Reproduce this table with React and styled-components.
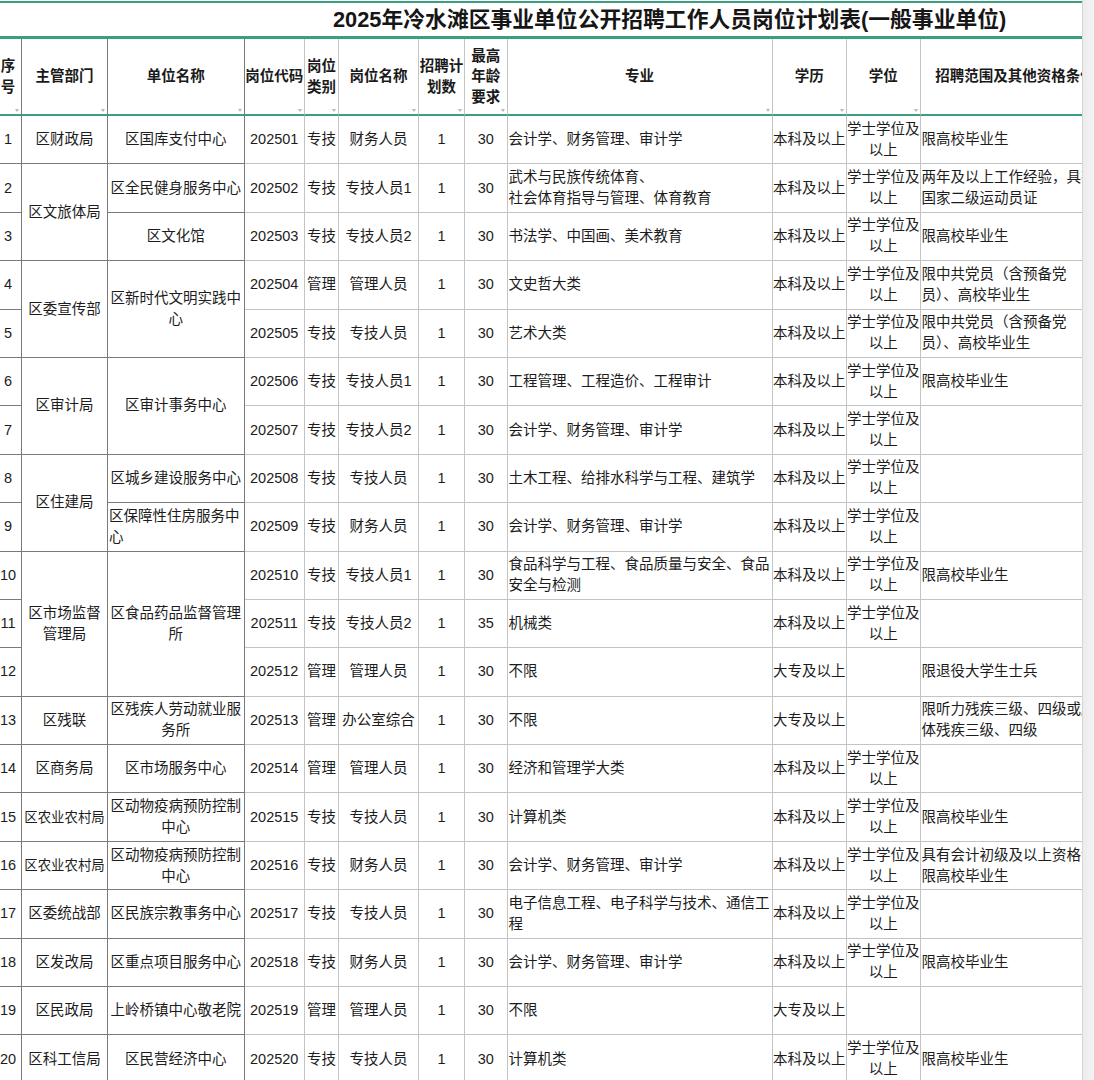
import React from "react";
import styled, { createGlobalStyle } from "styled-components";

const GREEN = "#3a9f80";
const DARK_LINE = "#7a7a7a";
const LIGHT_LINE = "#c4c4c4";

// column widths of the sheet (first column is partly scrolled off to the left)
const COLS = [27, 86, 136.5, 60.5, 34, 80, 46, 42.5, 265, 74.5, 73.5, 190];
const ALIGN = ["center", "center", "center", "center", "center", "center", "center", "center", "left", "center", "center", "left"];
const DARK_COLS = [0, 1, 2];

const HEADERS = [
  ["序", "号"],
  ["主管部门"],
  ["单位名称"],
  ["岗位代码"],
  ["岗位", "类别"],
  ["岗位名称"],
  ["招聘计", "划数"],
  ["最高", "年龄", "要求"],
  ["专业"],
  ["学历"],
  ["学位"],
  ["招聘范围及其他资格条件"],
];

const XS = ["学士学位及", "以上"];
const BK = "本科及以上";
const DZ = "大专及以上";
const GX = "限高校毕业生";
const KJ = "会计学、财务管理、审计学";
const DY = ["限中共党员（含预备党", "员）、高校毕业生"];

// null = covered by a merged cell above
const ROWS = [
  ["1", "区财政局", "区国库支付中心", "202501", "专技", "财务人员", "1", "30", KJ, BK, XS, GX],
  ["2", { t: "区文旅体局", span: 2 }, "区全民健身服务中心", "202502", "专技", "专技人员1", "1", "30",
    ["武术与民族传统体育、", "社会体育指导与管理、体育教育"], BK, XS, ["两年及以上工作经验，具有", "国家二级运动员证"]],
  ["3", null, "区文化馆", "202503", "专技", "专技人员2", "1", "30", "书法学、中国画、美术教育", BK, XS, GX],
  ["4", { t: "区委宣传部", span: 2 }, { t: ["区新时代文明实践中", "心"], span: 2 }, "202504", "管理", "管理人员", "1", "30", "文史哲大类", BK, XS, DY],
  ["5", null, null, "202505", "专技", "专技人员", "1", "30", "艺术大类", BK, XS, DY],
  ["6", { t: "区审计局", span: 2 }, { t: "区审计事务中心", span: 2 }, "202506", "专技", "专技人员1", "1", "30", "工程管理、工程造价、工程审计", BK, XS, GX],
  ["7", null, null, "202507", "专技", "专技人员2", "1", "30", KJ, BK, XS, ""],
  ["8", { t: "区住建局", span: 2 }, "区城乡建设服务中心", "202508", "专技", "专技人员", "1", "30", "土木工程、给排水科学与工程、建筑学", BK, XS, ""],
  ["9", null, { t: ["区保障性住房服务中", "心"], align: "left" }, "202509", "专技", "财务人员", "1", "30", KJ, BK, XS, ""],
  ["10", { t: ["区市场监督", "管理局"], span: 3 }, { t: ["区食品药品监督管理", "所"], span: 3 }, "202510", "专技", "专技人员1", "1", "30",
    ["食品科学与工程、食品质量与安全、食品", "安全与检测"], BK, XS, GX],
  ["11", null, null, "202511", "专技", "专技人员2", "1", "35", "机械类", BK, XS, ""],
  ["12", null, null, "202512", "管理", "管理人员", "1", "30", "不限", DZ, "", "限退役大学生士兵"],
  ["13", "区残联", ["区残疾人劳动就业服", "务所"], "202513", "管理", "办公室综合", "1", "30", "不限", DZ, "",
    ["限听力残疾三级、四级或肢", "体残疾三级、四级"]],
  ["14", "区商务局", "区市场服务中心", "202514", "管理", "管理人员", "1", "30", "经济和管理学大类", BK, XS, ""],
  ["15", { t: "区农业农村局", size: 13.4 }, ["区动物疫病预防控制", "中心"], "202515", "专技", "专技人员", "1", "30", "计算机类", BK, XS, GX],
  ["16", { t: "区农业农村局", size: 13.4 }, ["区动物疫病预防控制", "中心"], "202516", "专技", "财务人员", "1", "30", KJ, BK, XS,
    ["具有会计初级及以上资格证", "限高校毕业生"]],
  ["17", "区委统战部", "区民族宗教事务中心", "202517", "专技", "专技人员", "1", "30", ["电子信息工程、电子科学与技术、通信工", "程"], BK, XS, ""],
  ["18", "区发改局", "区重点项目服务中心", "202518", "专技", "财务人员", "1", "30", KJ, BK, XS, GX],
  ["19", "区民政局", "上岭桥镇中心敬老院", "202519", "管理", "管理人员", "1", "30", "不限", DZ, "", ""],
  ["20", "区科工信局", "区民营经济中心", "202520", "专技", "专技人员", "1", "30", "计算机类", BK, XS, GX],
];

const GlobalStyle = createGlobalStyle`
  html, body {
    margin: 0;
    padding: 0;
    background: #fff;
  }
  body {
    font-family: "Liberation Sans", "Noto Sans CJK SC", sans-serif;
    color: #1c1c1c;
  }
`;

const Page = styled.div`
  width: 1094px;
  height: 1080px;
  display: flex;
  overflow: hidden;
  background: #fff;
`;

const Sheet = styled.div`
  width: 1082px;
  flex: none;
  overflow: hidden;
  padding-top: 1px;
  border-right: 1px solid #d6d6d6;
`;

const Gutter = styled.div`
  flex: 1;
  background: linear-gradient(90deg, #ececec, #f4f4f4);
`;

const TitleRow = styled.div`
  height: 33px;
  border-top: 2px solid ${GREEN};
  border-bottom: 3px solid ${GREEN};
  padding-left: 333px;
  font-size: 21.8px;
  font-weight: 700;
  line-height: 33px;
  white-space: nowrap;
  color: #161616;
`;

const Grid = styled.div`
  display: grid;
  grid-template-columns: ${COLS.map((w) => `${w}px`).join(" ")};
  grid-template-rows: 77px repeat(${ROWS.length}, 48.4px);
  margin-left: -5px;
  width: max-content;
`;

const Cell = styled.div`
  grid-column: ${(p) => p.$col};
  grid-row: ${(p) => p.$row} / span ${(p) => p.$span};
  box-sizing: border-box;
  display: flex;
  flex-direction: column;
  justify-content: center;
  align-items: ${(p) => (p.$align === "left" ? "flex-start" : "center")};
  text-align: ${(p) => p.$align};
  padding-left: ${(p) => (p.$align === "left" ? "1px" : "0")};
  border-right: 1px solid ${(p) => (p.$dark ? DARK_LINE : LIGHT_LINE)};
  border-bottom: 1px solid ${(p) => (p.$dark ? DARK_LINE : LIGHT_LINE)};
  overflow: hidden;
  white-space: nowrap;
  font-size: ${(p) => p.$size}px;
  line-height: 21px;
`;

const HeadCell = styled.div`
  grid-column: ${(p) => p.$col};
  grid-row: 1;
  position: relative;
  box-sizing: border-box;
  display: flex;
  flex-direction: column;
  justify-content: center;
  align-items: center;
  border-right: 1px solid ${(p) => (p.$dark ? DARK_LINE : LIGHT_LINE)};
  border-bottom: 2px solid ${GREEN};
  overflow: hidden;
  white-space: nowrap;
  font-size: 14.5px;
  font-weight: 700;
  line-height: 20.5px;
  color: #1a1a1a;
`;

const FilterMark = styled.span`
  position: absolute;
  right: 2px;
  bottom: 2px;
  width: 0;
  height: 0;
  border-left: 2.5px solid transparent;
  border-right: 2.5px solid transparent;
  border-top: 3px solid #b8b8b8;
`;

const Line = styled.span`
  display: block;
`;

const lines = (t) => (Array.isArray(t) ? t : t ? [t] : []);

export default function App() {
  const body = [];
  ROWS.forEach((row, r) => {
    row.forEach((entry, c) => {
      if (entry === null) return;
      const obj = typeof entry === "object" && !Array.isArray(entry) ? entry : { t: entry };
      body.push(
        <Cell
          key={`${r}-${c}`}
          $col={c + 1}
          $row={r + 2}
          $span={obj.span || 1}
          $align={obj.align || ALIGN[c]}
          $size={obj.size || 14.5}
          $dark={DARK_COLS.includes(c)}
        >
          {lines(obj.t).map((l, i) => (
            <Line key={i}>{l}</Line>
          ))}
        </Cell>
      );
    });
  });

  return (
    <Page>
      <GlobalStyle />
      <Sheet>
        <TitleRow>2025年冷水滩区事业单位公开招聘工作人员岗位计划表(一般事业单位)</TitleRow>
        <Grid>
          {HEADERS.map((h, c) => (
            <HeadCell key={c} $col={c + 1} $dark={DARK_COLS.includes(c)}>
              {h.map((l, i) => (
                <Line key={i}>{l}</Line>
              ))}
              {c < HEADERS.length - 1 && <FilterMark />}
            </HeadCell>
          ))}
          {body}
        </Grid>
      </Sheet>
      <Gutter />
    </Page>
  );
}
